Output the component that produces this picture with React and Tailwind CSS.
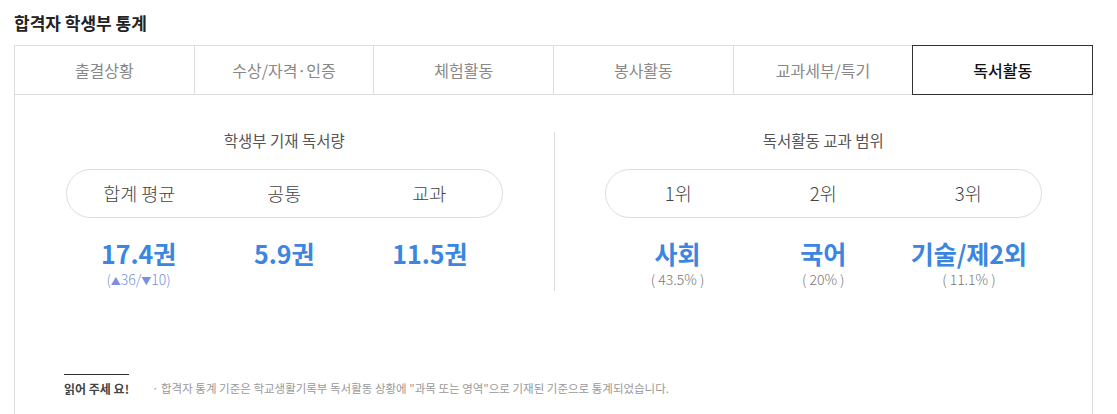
import React from "react";

const tabs = ["출결상황", "수상/자격·인증", "체험활동", "봉사활동", "교과세부/특기", "독서활동"];

const font = { fontFamily: '"Noto Sans CJK KR", "Noto Sans", sans-serif' };

const StatBlock = ({ title, labels, values }) => (
  <div className="flex flex-col items-center">
    <div className="h-[16px] leading-[16px] text-[15.5px] text-[#555]">{title}</div>
    <div className="mt-[21px] w-[437px] h-[49px] rounded-full border border-[#ddd] grid grid-cols-3 items-center">
      {labels.map((l) => (
        <div key={l} className="text-center text-[18.5px] font-light text-[#444]">
          {l}
        </div>
      ))}
    </div>
    <div className="w-[437px] grid grid-cols-3 mt-[20px]">
      {values.map((v) => (
        <div key={v.main} className="flex flex-col items-center">
          <div className="text-[25px] leading-[31px] font-bold text-[#3a86e0]">{v.main}</div>
          {v.sub && <div className="leading-[18px]">{v.sub}</div>}
        </div>
      ))}
    </div>
  </div>
);

export default function App() {
  return (
    <div className="w-[1117px] h-[414px] bg-white overflow-hidden" style={font}>
      <div className="pl-[14px] pt-[10px] h-[45px] text-[17px] font-bold text-[#222]">합격자 학생부 통계</div>
      <div className="ml-[14px] w-[1079px] flex">
        {tabs.map((t, i) => {
          const active = i === tabs.length - 1;
          return (
            <div
              key={t}
              className={
                "flex-1 h-[50px] flex items-center justify-center text-[16px] " +
                (active
                  ? "border border-[#333] -ml-px text-[#111] font-medium"
                  : "border-y border-r border-[#ddd] text-[#888] " + (i === 0 ? "border-l" : ""))
              }
            >
              {t}
            </div>
          );
        })}
      </div>
      <div className="ml-[14px] w-[1079px] h-[320px] border-x border-[#ddd] pt-[37px]">
        <div className="grid grid-cols-2">
          <div className="pb-[1px]">
            <StatBlock
              title="학생부 기재 독서량"
              labels={["합계 평균", "공통", "교과"]}
              values={[
                {
                  main: "17.4권",
                  sub: (
                    <span className="text-[14px] font-light text-[#7a8fe0]">
                      (<span className="text-[10px]">▲</span>36/<span className="text-[10px]">▼</span>10)
                    </span>
                  ),
                },
                { main: "5.9권" },
                { main: "11.5권" },
              ]}
            />
          </div>
          <div className="border-l border-[#ddd] pb-[1px]">
            <StatBlock
              title="독서활동 교과 범위"
              labels={["1위", "2위", "3위"]}
              values={[
                { main: "사회", sub: <span className="text-[14px] font-light text-[#777]">( 43.5% )</span> },
                { main: "국어", sub: <span className="text-[14px] font-light text-[#777]">( 20% )</span> },
                { main: "기술/제2외", sub: <span className="text-[14px] font-light text-[#777]">( 11.1% )</span> },
              ]}
            />
          </div>
        </div>
        <div className="mt-[83px] ml-[49px] flex items-start">
          <div className="w-[65px] border-t border-[#333] pt-[6px] text-[12px] font-bold text-[#444] leading-[16px] whitespace-nowrap">
            읽어 주세 요!
          </div>
          <div className="ml-[23px] pt-[6px] text-[11.5px] leading-[16px] text-[#999] whitespace-nowrap">
            · 합격자 통계 기준은 학교생활기록부 독서활동 상황에 "과목 또는 영역"으로 기재된 기준으로 통계되었습니다.
          </div>
        </div>
      </div>
    </div>
  );
}
